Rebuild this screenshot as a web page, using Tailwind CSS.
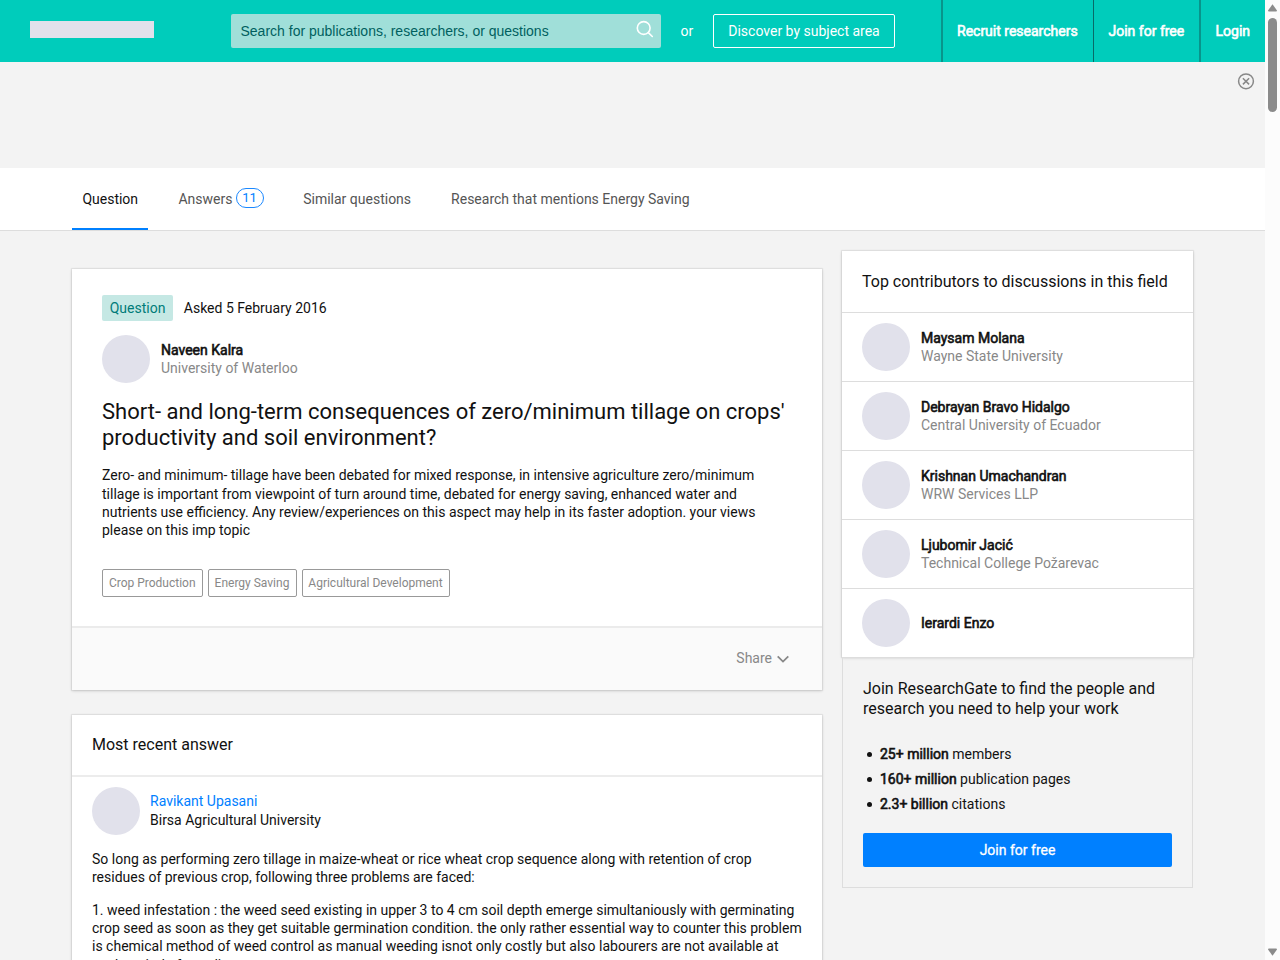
<!DOCTYPE html>
<html lang="en">
<head>
    <meta charset="UTF-8">
    <meta name="viewport" content="width=device-width, initial-scale=1.0">
    <title>Short- and long-term consequences of zero/minimum tillage</title>
    <script src="https://cdn.jsdelivr.net/npm/@tailwindcss/browser@4"></script>
</head>
<body class="bg-[#f3f3f3] font-['Roboto',sans-serif] text-sm leading-[18.2px] text-[#111]">
<div class="flex w-[1280px] h-[960px] overflow-hidden">
    <div class="w-[1265px] h-[960px] overflow-hidden">

        <!-- Header -->
        <header class="flex h-[62px] bg-[#00ccbb] text-white">
            <div class="ml-[30px] mt-[21px] w-[124px] h-[17px] bg-[#e1e1eb]"></div>
            <div class="ml-[76.5px] mt-3.5 w-[430px] h-[34px] rounded-xs bg-[#a0dfd9] flex items-center justify-between pl-2.5 pr-1.5">
                <span class="font-['Liberation_Sans',sans-serif] text-[#005f5f]">Search for publications, researchers, or questions</span>
                <svg class="w-5 h-5 -mt-1" viewBox="0 0 20 20" fill="none" stroke="white" stroke-width="1.6" stroke-linecap="round"><circle cx="8.7" cy="9" r="6.4"/><path d="M13.3 13.6l4 3.9"/></svg>
            </div>
            <span class="ml-5 mt-[22px]">or</span>
            <div class="ml-5 mt-3.5 w-[181.5px] h-[34px] rounded-xs border border-white flex items-center justify-center">Discover by subject area</div>
            <nav class="ml-auto flex leading-[62px] [-webkit-text-stroke:0.6px_white]">
                <a class="w-[152px] pl-3.5 border-l-2 border-[#08948b]">Recruit researchers</a>
                <a class="w-[106px] pl-[14.5px] border-l border-[#086b68]">Join for free</a>
                <a class="w-[66px] pl-[14.5px] border-l-2 border-[#08948b]">Login</a>
            </nav>
        </header>

        <!-- Ad slot -->
        <div class="h-[106px] flex justify-end pt-[11px] pr-[11px]">
            <svg class="w-4 h-4 overflow-visible" viewBox="0 0 16 16" fill="none" stroke="#888" stroke-width="1.5"><circle cx="8" cy="8.3" r="7.4"/><path d="M4.9 5.2l6.2 6.2M11.1 5.2l-6.2 6.2"/></svg>
        </div>

        <!-- Tabs -->
        <div class="h-[63px] bg-white border-b border-[#ddd] flex pl-[72.4px] text-[#555] leading-[62px]">
            <a class="w-[75.6px] pl-2.5 border-b-2 border-[#0080ff] text-[#111]">Question</a>
            <a class="ml-[30.5px] flex">Answers<span class="ml-[3px] mt-5 w-7 h-5 rounded-full border border-[#1a88ff] text-[#0080ff] text-[13px] leading-[18px] text-center">11</span></a>
            <a class="ml-[39.7px]">Similar questions</a>
            <a class="ml-10">Research that mentions Energy Saving</a>
        </div>

        <div class="flex items-start pl-[72px]">
            <main class="w-[750px] pt-[38px] shrink-0">
                <!-- Question -->
                <section class="h-[420.5px] bg-white shadow-[0_1px_3px_rgba(0,0,0,0.15),0_0_1px_1px_rgba(0,0,0,0.06)] flex flex-col">
                    <div class="h-[357px] px-[30px] pt-[26px]">
                        <div class="flex items-center h-[26px]">
                            <span class="h-[26px] w-[71.2px] text-center leading-[26px] rounded-xs bg-[#c5e8e4] text-[#007c79]">Question</span>
                            <span class="ml-[10.6px]">Asked 5 February 2016</span>
                        </div>
                        <div class="flex mt-3.5">
                            <div class="w-12 h-12 rounded-full bg-[#e1e1eb]"></div>
                            <div class="ml-[11px] mt-1.5 leading-[18px]">
                                <p class="[-webkit-text-stroke:0.6px]">Naveen Kalra</p>
                                <p class="text-[#888]">University of Waterloo</p>
                            </div>
                        </div>
                        <h1 class="mt-4 text-[22px] leading-[26.4px] whitespace-nowrap">Short- and long-term consequences of zero/minimum tillage on crops'<br>productivity and soil environment?</h1>
                        <p class="mt-[14.5px] whitespace-nowrap">Zero- and minimum- tillage have been debated for mixed response, in intensive agriculture zero/minimum<br>tillage is important from viewpoint of turn around time, debated for energy saving, enhanced water and<br>nutrients use efficiency. Any review/experiences on this aspect may help in its faster adoption. your views<br>please on this imp topic</p>
                        <div class="mt-[29.5px] flex gap-[5px] text-xs text-[#888]">
                            <span class="w-[100.5px] h-[28.4px] leading-[27px] text-center border border-[#999] rounded-xs">Crop Production</span>
                            <span class="w-[89px] h-[28.4px] leading-[27px] text-center border border-[#999] rounded-xs">Energy Saving</span>
                            <span class="w-[148px] h-[28.4px] leading-[27px] text-center border border-[#999] rounded-xs">Agricultural Development</span>
                        </div>
                    </div>
                    <div class="flex-1 bg-[#fafafa] border-t-2 border-[#ebebeb] flex justify-end items-center pr-[33px] pb-[1.5px] text-[#888]">
                        Share
                        <svg class="ml-[5px] mt-px w-3 h-2" viewBox="0 0 12 8" fill="none" stroke="#888" stroke-width="1.8"><path d="M.7 1.3L6 6.6l5.3-5.3"/></svg>
                    </div>
                </section>

                <!-- Most recent answer -->
                <section class="mt-[25px] h-[400px] bg-white shadow-[0_1px_3px_rgba(0,0,0,0.15),0_0_1px_1px_rgba(0,0,0,0.06)]">
                    <h2 class="h-[62px] px-5 text-base/[60px] border-b-2 border-[#ececec]">Most recent answer</h2>
                    <div class="px-5 pt-2.5">
                        <div class="flex">
                            <div class="w-12 h-12 rounded-full bg-[#e1e1eb]"></div>
                            <div class="ml-2.5 mt-[5px] leading-[19px]">
                                <p class="text-[#0080ff]">Ravikant Upasani</p>
                                <p>Birsa Agricultural University</p>
                            </div>
                        </div>
                        <p class="mt-[15.5px] whitespace-nowrap">So long as performing zero tillage in maize-wheat or rice wheat crop sequence along with retention of crop<br>residues of previous crop, following three problems are faced:</p>
                        <p class="mt-[14.5px] whitespace-nowrap">1. weed infestation : the weed seed existing in upper 3 to 4 cm soil depth emerge simultaniously with germinating<br>crop seed as soon as they get suitable germination condition. the only rather essential way to counter this problem<br>is chemical method of weed control as manual weeding isnot only costly but also labourers are not available at<br>peak period of weeding.</p>
                    </div>
                </section>
            </main>

            <aside class="ml-5 mt-5 w-[351px]">
                <!-- Top contributors -->
                <section class="bg-white shadow-[0_1px_3px_rgba(0,0,0,0.15),0_0_1px_1px_rgba(0,0,0,0.06)]">
                    <h2 class="h-[61px] px-5 text-base/[61px] whitespace-nowrap">Top contributors to discussions in this field</h2>
                    <div class="h-[69px] border-t border-[#ddd] px-5 flex items-center">
                        <div class="w-12 h-12 rounded-full bg-[#e1e1eb]"></div>
                        <div class="ml-[11px] leading-[18px]">
                            <p class="[-webkit-text-stroke:0.6px]">Maysam Molana</p>
                            <p class="text-[#888]">Wayne State University</p>
                        </div>
                    </div>
                    <div class="h-[69px] border-t border-[#ddd] px-5 flex items-center">
                        <div class="w-12 h-12 rounded-full bg-[#e1e1eb]"></div>
                        <div class="ml-[11px] leading-[18px]">
                            <p class="[-webkit-text-stroke:0.6px]">Debrayan Bravo Hidalgo</p>
                            <p class="text-[#888]">Central University of Ecuador</p>
                        </div>
                    </div>
                    <div class="h-[69px] border-t border-[#ddd] px-5 flex items-center">
                        <div class="w-12 h-12 rounded-full bg-[#e1e1eb]"></div>
                        <div class="ml-[11px] leading-[18px]">
                            <p class="[-webkit-text-stroke:0.6px]">Krishnan Umachandran</p>
                            <p class="text-[#888]">WRW Services LLP</p>
                        </div>
                    </div>
                    <div class="h-[69px] border-t border-[#ddd] px-5 flex items-center">
                        <div class="w-12 h-12 rounded-full bg-[#e1e1eb]"></div>
                        <div class="ml-[11px] leading-[18px]">
                            <p class="[-webkit-text-stroke:0.6px]">Ljubomir Jacić</p>
                            <p class="text-[#888]">Technical College Požarevac</p>
                        </div>
                    </div>
                    <div class="h-[69px] border-t border-[#ddd] px-5 flex items-center">
                        <div class="w-12 h-12 rounded-full bg-[#e1e1eb]"></div>
                        <p class="ml-[11px] [-webkit-text-stroke:0.6px]">Ierardi Enzo</p>
                    </div>
                </section>

                <!-- Join -->
                <section class="h-[231px] border border-[#ddd] px-5 pt-[21px]">
                    <h2 class="text-base/5">Join ResearchGate to find the people and<br>research you need to help your work</h2>
                    <ul class="mt-[23px] leading-[25px] pl-[17px] list-none">
                        <li class="flex items-center"><i class="w-[5px] h-[5px] rounded-full bg-[#111] -ml-[13px] mr-2 -mt-px"></i><span><b class="font-normal [-webkit-text-stroke:0.6px]">25+ million</b> members</span></li>
                        <li class="flex items-center"><i class="w-[5px] h-[5px] rounded-full bg-[#111] -ml-[13px] mr-2 -mt-px"></i><span><b class="font-normal [-webkit-text-stroke:0.6px]">160+ million</b> publication pages</span></li>
                        <li class="flex items-center"><i class="w-[5px] h-[5px] rounded-full bg-[#111] -ml-[13px] mr-2 -mt-px"></i><span><b class="font-normal [-webkit-text-stroke:0.6px]">2.3+ billion</b> citations</span></li>
                    </ul>
                    <div class="mt-4 h-[34px] leading-[34px] rounded-xs bg-[#0080ff] text-white text-center [-webkit-text-stroke:0.3px]">Join for free</div>
                </section>
            </aside>
        </div>
    </div>

    <!-- Scrollbar -->
    <div class="w-[15px] h-[960px] bg-[#fcfcfc] flex flex-col items-center">
        <svg class="mt-1 w-[9px] h-2" viewBox="0 0 9 8"><path d="M4.5.3L9 6.5Q9 7.5 8 7.5H1Q0 7.5 0 6.5z" fill="#8b8b8b"/></svg>
        <div class="mt-1.5 w-[9px] h-[94px] rounded-full bg-[#8b8b8b]"></div>
        <svg class="mt-auto mb-1 w-[9px] h-2" viewBox="0 0 9 8"><path d="M4.5 7.7L9 1.5Q9 .5 8 .5H1Q0 .5 0 1.5z" fill="#8b8b8b"/></svg>
    </div>
</div>
</body>
</html>
